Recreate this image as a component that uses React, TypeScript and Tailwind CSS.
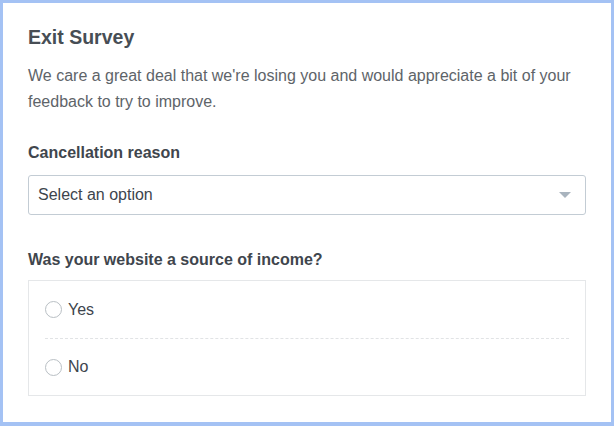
export default function App() {
  return (
    <div className="w-[614px] h-[426px] bg-white border-[3px] border-b-4 border-[#a4c2f4] font-['Liberation_Sans',Arial,sans-serif] text-[#4a5057]">
      <div className="px-[25px] pt-[22px]">
        {/* header */}
        <h1 className="text-[19.5px] font-bold leading-[24px] text-[#474e55]">Exit Survey</h1>
        <p className="mt-[14px] text-[16px] leading-[26px] text-[#5e6469]">
          We care a great deal that we're losing you and would appreciate a bit of your feedback to try to improve.
        </p>

        {/* cancellation reason */}
        <label className="block mt-[28px] text-[16px] font-bold leading-[20px] text-[#3f464d]">Cancellation reason</label>
        <div className="mt-[12px] h-[40px] rounded-[3px] border border-[#c3ccd4] flex items-center justify-between pl-[9px] pr-[14px]">
          <span className="text-[16px] text-[#3d454d]">Select an option</span>
          <svg width="12" height="6" viewBox="0 0 12 6">
            <path d="M0 0h12L6 6z" fill="#a9b4be" />
          </svg>
        </div>

        {/* income question */}
        <label className="block mt-[35px] text-[16px] font-bold leading-[20px] text-[#3f464d]">Was your website a source of income?</label>
        <div className="mt-[10px] border border-[#e5e7e9] px-[16px]">
          <div className="h-[58px] flex items-center gap-[6px] border-b border-dashed border-[#e1e3e5]">
            <span className="w-[17px] h-[17px] rounded-full border border-[#b9bfc4]" />
            <span className="text-[16px] text-[#3d454d]">Yes</span>
          </div>
          <div className="h-[56px] flex items-center gap-[6px]">
            <span className="w-[17px] h-[17px] rounded-full border border-[#b9bfc4]" />
            <span className="text-[16px] text-[#3d454d]">No</span>
          </div>
        </div>
      </div>
    </div>
  );
}
